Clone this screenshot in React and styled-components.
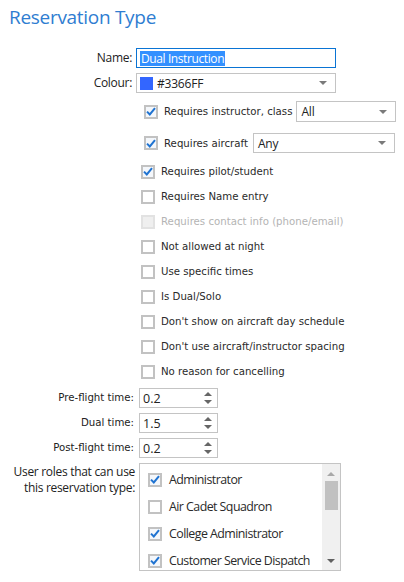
import React from "react";
import styled, { createGlobalStyle } from "styled-components";

const Global = createGlobalStyle`
  html, body { margin: 0; padding: 0; background: #fff; }
  body { font-family: "Open Sans", "Noto Sans", sans-serif; color: #222; }
  * { box-sizing: border-box; }
`;

const Page = styled.div`
  width: 404px;
  height: 582px;
  overflow: hidden;
  position: relative;
`;

const Title = styled.h1`
  margin: 0;
  padding: 3px 0 0 9px;
  height: 48px;
  font-family: "Open Sans", sans-serif;
  font-weight: 400;
  font-size: 19px;
  letter-spacing: -0.3px;
  color: #2f7dd1;
  line-height: 28px;
`;

const Form = styled.div`
  display: flex;
  flex-direction: column;
`;

const Field = styled.div`
  display: flex;
  align-items: ${(p) => (p.$top ? "flex-start" : "center")};
  height: ${(p) => p.$h || 20}px;
  margin-top: ${(p) => p.$mt || 0}px;
`;

const Label = styled.div`
  width: ${(p) => p.$w || 132}px;
  margin-right: ${(p) => p.$gap || 4}px;
  text-align: right;
  font-family: ${(p) =>
    p.$verdana ? '"DejaVu Sans", Verdana, sans-serif' : '"Open Sans", sans-serif'};
  font-size: ${(p) => (p.$verdana ? "10.2px" : "12px")};
  letter-spacing: ${(p) => (p.$verdana ? "0" : "-0.3px")};
  color: #222;
  line-height: 16px;
  padding-top: ${(p) => p.$pt || 0}px;
`;

const TextInput = styled.div`
  width: 200px;
  height: 20px;
  border: 1px solid #0a74d4;
  display: flex;
  align-items: center;
  padding-left: 3px;
  font-family: "Open Sans", sans-serif;
  font-size: 12px;
`;

const Selected = styled.span`
  background: #3390ff;
  color: #fff;
  line-height: 15px;
  padding: 0 1px;
  letter-spacing: -0.4px;
`;

const SelectBox = styled.div`
  width: ${(p) => p.$w}px;
  height: ${(p) => p.$h || 20}px;
  border: 1px solid #c4c4c4;
  background: #fff;
  display: flex;
  align-items: center;
  padding-left: 4px;
  padding-right: 8px;
  font-family: "Open Sans", sans-serif;
  font-size: 12px;
  letter-spacing: -0.2px;
  color: #222;
`;

const SelectText = styled.span`
  flex: 1;
`;

const Swatch = styled.span`
  width: 13px;
  height: 13px;
  background: #3366ff;
  margin-right: 4px;
  margin-left: -1px;
`;

const Caret = styled.span`
  width: 0;
  height: 0;
  border-left: 4px solid transparent;
  border-right: 4px solid transparent;
  border-top: 4px solid #7a7a7a;
`;

const CheckRow = styled.div`
  display: flex;
  align-items: center;
  height: ${(p) => p.$h || 25}px;
  margin-top: ${(p) => p.$mt || 0}px;
  padding-left: ${(p) => p.$indent || 141}px;
`;

const BoxWrap = styled.span`
  width: 14px;
  height: 14px;
  flex: none;
  border: 2px solid ${(p) => (p.$disabled ? "#e2e2e2" : "#c2c2c2")};
  background: ${(p) => (p.$disabled ? "#efefef" : p.$checked ? "#f4f7fb" : "#fff")};
  display: flex;
  align-items: center;
  justify-content: center;
`;

const CheckText = styled.span`
  margin-left: 6px;
  margin-right: ${(p) => p.$mr || 0}px;
  font-family: ${(p) =>
    p.$segoe ? '"Open Sans", sans-serif' : '"DejaVu Sans", Verdana, sans-serif'};
  font-size: ${(p) => (p.$segoe ? "12.4px" : "10.2px")};
  letter-spacing: ${(p) => (p.$segoe ? "-0.55px" : "0")};
  color: ${(p) => (p.$disabled ? "#b4b4b4" : "#2a2a2a")};
  white-space: nowrap;
`;

const Check = ({ checked, disabled }) => (
  <BoxWrap $checked={checked} $disabled={disabled}>
    {checked && (
      <svg width="10" height="9" viewBox="0 0 10 9">
        <path d="M1 4.6 L3.8 7.4 L9 1.2" fill="none" stroke="#1f73d1" strokeWidth="2" />
      </svg>
    )}
  </BoxWrap>
);

const SpinBox = styled.div`
  width: 79px;
  height: 20px;
  border: 1px solid #c4c4c4;
  display: flex;
  align-items: center;
  padding-left: 3px;
  padding-right: 5px;
  font-family: "Open Sans", sans-serif;
  font-size: 12.5px;
  color: #222;
`;

const SpinArrows = styled.span`
  display: flex;
  flex-direction: column;
  gap: 4px;
  margin-left: auto;
`;

const Tri = styled.span`
  width: 0;
  height: 0;
  border-left: 4px solid transparent;
  border-right: 4px solid transparent;
  ${(p) => (p.$up ? "border-bottom: 4px solid #666;" : "border-top: 4px solid #666;")}
`;

const ListBox = styled.div`
  width: 202px;
  height: 108px;
  border: 1px solid #c4c4c4;
  display: flex;
  overflow: hidden;
`;

const ListItems = styled.div`
  flex: 1;
  padding-top: 2px;
`;

const ListItem = styled.div`
  display: flex;
  align-items: center;
  height: 27px;
  padding-left: 8px;
  & > span:last-child { margin-left: 7px; }
`;

const ScrollBar = styled.div`
  width: 18px;
  background: #f0f0f0;
  display: flex;
  flex-direction: column;
  align-items: center;
  padding: 8px 0 7px;
`;

const Thumb = styled.div`
  width: 13px;
  height: 29px;
  background: #c1c1c1;
  margin-top: 5px;
`;

const ScrollTri = styled.span`
  width: 0;
  height: 0;
  border-left: 4px solid transparent;
  border-right: 4px solid transparent;
  ${(p) => (p.$up ? "border-bottom: 4px solid #a8a8a8;" : "border-top: 4px solid #606060; margin-top: auto;")}
`;

const plainChecks = [
  { t: "Requires pilot/student", c: true },
  { t: "Requires Name entry" },
  { t: "Requires contact info (phone/email)", d: true },
  { t: "Not allowed at night" },
  { t: "Use specific times" },
  { t: "Is Dual/Solo" },
  { t: "Don't show on aircraft day schedule" },
  { t: "Don't use aircraft/instructor spacing" },
  { t: "No reason for cancelling" },
];

const spins = [
  ["Pre-flight time:", "0.2"],
  ["Dual time:", "1.5"],
  ["Post-flight time:", "0.2"],
];

const roles = [
  ["Administrator", true],
  ["Air Cadet Squadron", false],
  ["College Administrator", true],
  ["Customer Service Dispatch", true],
];

export default function App() {
  return (
    <Page>
      <Global />
      <Title>Reservation Type</Title>
      <Form>
        <Field>
          <Label>Name:</Label>
          <TextInput>
            <Selected>Dual Instruction</Selected>
          </TextInput>
        </Field>
        <Field $mt={5}>
          <Label>Colour:</Label>
          <SelectBox $w={200}>
            <Swatch />
            <SelectText>#3366FF</SelectText>
            <Caret />
          </SelectBox>
        </Field>
        <CheckRow $indent={144} $h={21} $mt={8}>
          <Check checked />
          <CheckText $mr={4}>Requires instructor, class</CheckText>
          <SelectBox $w={100} $h={21}>
            <SelectText>All</SelectText>
            <Caret />
          </SelectBox>
        </CheckRow>
        <CheckRow $indent={144} $h={20} $mt={11}>
          <Check checked />
          <CheckText $mr={5}>Requires aircraft</CheckText>
          <SelectBox $w={142} $h={20}>
            <SelectText>Any</SelectText>
            <Caret />
          </SelectBox>
        </CheckRow>
        <div style={{ height: 6 }} />
        {plainChecks.map((c) => (
          <CheckRow key={c.t}>
            <Check checked={c.c} disabled={c.d} />
            <CheckText $disabled={c.d}>{c.t}</CheckText>
          </CheckRow>
        ))}
        {spins.map(([l, v], i) => (
          <Field key={l} $mt={i === 0 ? 4 : 5}>
            <Label $verdana $w={134} $gap={5}>{l}</Label>
            <SpinBox>
              {v}
              <SpinArrows>
                <Tri $up />
                <Tri />
              </SpinArrows>
            </SpinBox>
          </Field>
        ))}
        <Field $mt={5} $h={108} $top>
          <Label $w={135} $gap={4} $pt={1}>
            User roles that can use
            <br />
            this reservation type:
          </Label>
          <ListBox>
            <ListItems>
              {roles.map(([r, c]) => (
                <ListItem key={r}>
                  <Check checked={c} />
                  <CheckText $segoe>{r}</CheckText>
                </ListItem>
              ))}
            </ListItems>
            <ScrollBar>
              <ScrollTri $up />
              <Thumb />
              <ScrollTri />
            </ScrollBar>
          </ListBox>
        </Field>
      </Form>
    </Page>
  );
}
